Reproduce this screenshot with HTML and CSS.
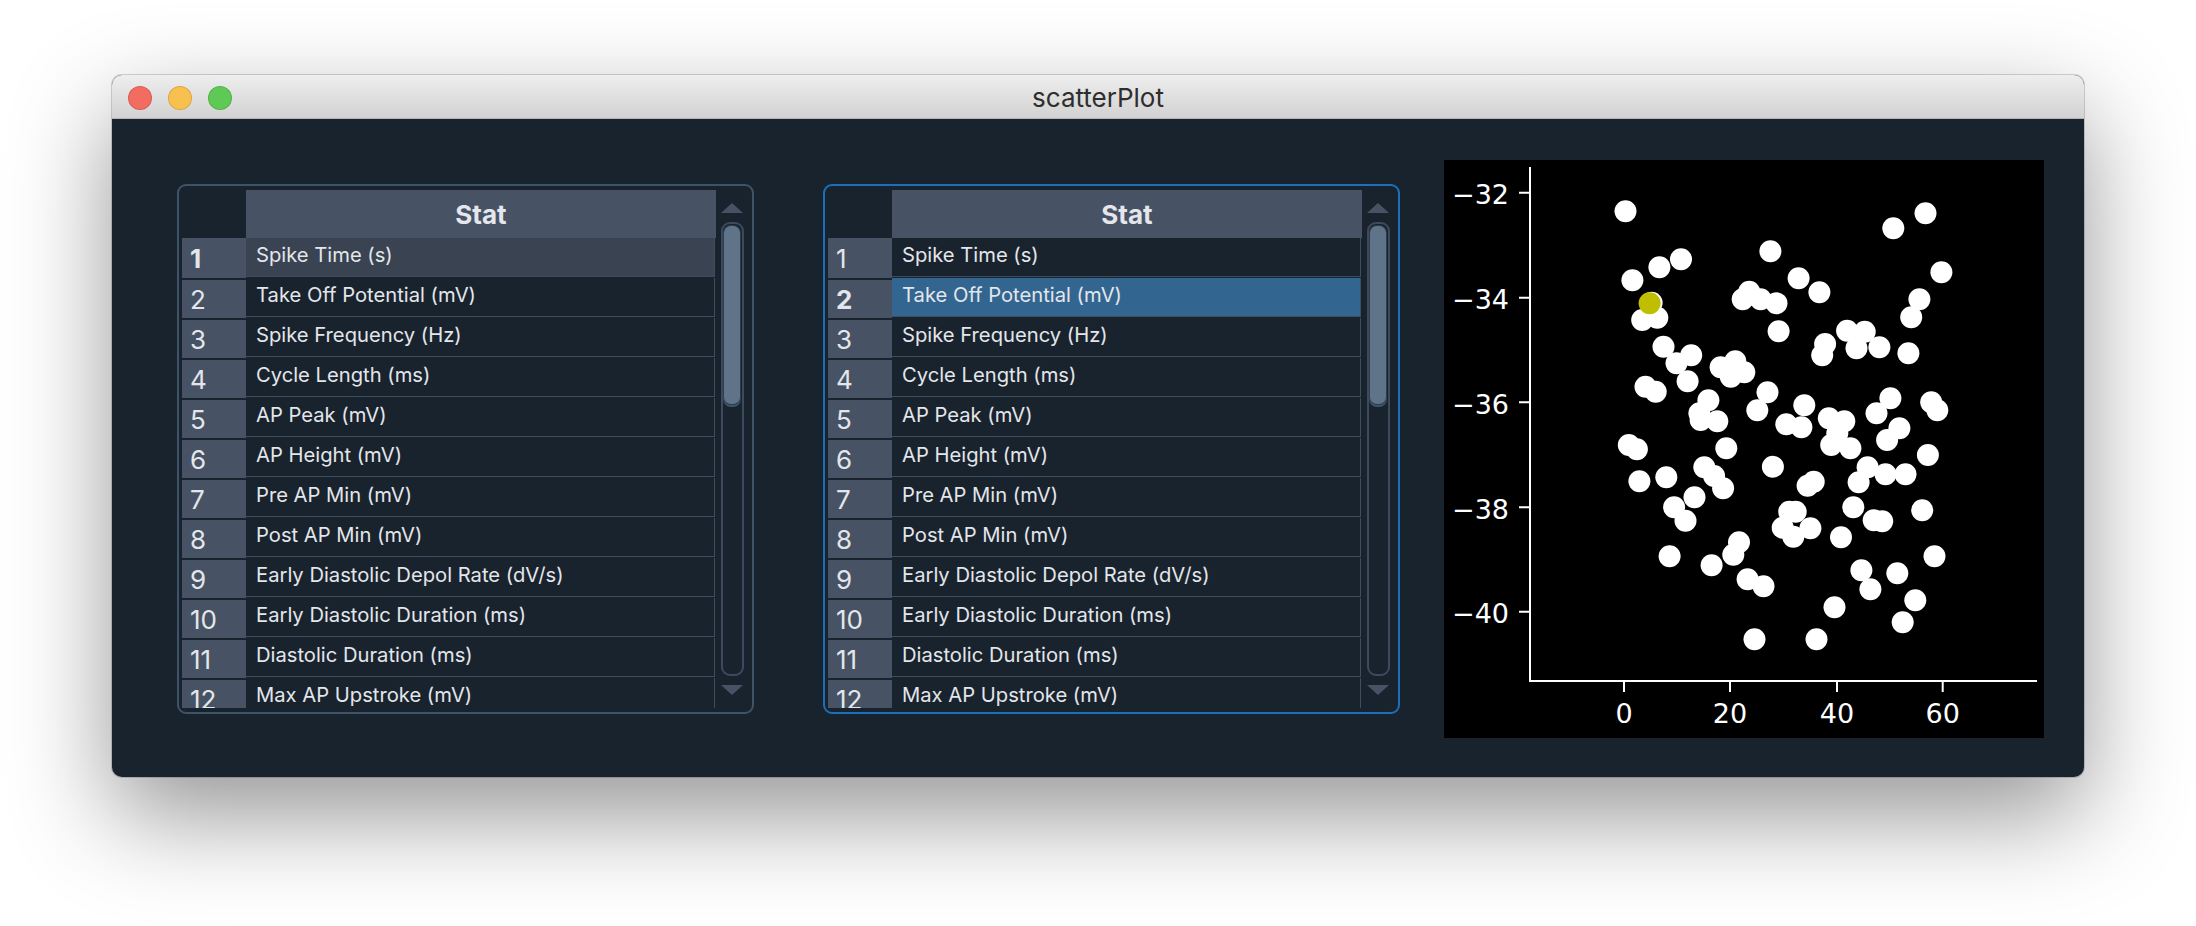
FILE: index.html
```html
<!DOCTYPE html>
<html lang="en">
<head>
<meta charset="UTF-8" />
<title>scatterPlot</title>
<link rel="stylesheet" href="styles.css">
</head>
<body>
  <div class="window">
    <div class="titlebar">
      <div class="lights">
        <span class="light red"></span>
        <span class="light yellow"></span>
        <span class="light green"></span>
      </div>
      <div class="title">scatterPlot</div>
    </div>
    <div class="content">

      <div class="panel">
        <div class="table">
          <div class="head-row"><div class="corner"></div><div class="col-head">Stat</div></div>
          <div class="row current"><div class="row-head">1</div><div class="cell">Spike Time (s)</div></div>
          <div class="row"><div class="row-head">2</div><div class="cell">Take Off Potential (mV)</div></div>
          <div class="row"><div class="row-head">3</div><div class="cell">Spike Frequency (Hz)</div></div>
          <div class="row"><div class="row-head">4</div><div class="cell">Cycle Length (ms)</div></div>
          <div class="row"><div class="row-head">5</div><div class="cell">AP Peak (mV)</div></div>
          <div class="row"><div class="row-head">6</div><div class="cell">AP Height (mV)</div></div>
          <div class="row"><div class="row-head">7</div><div class="cell">Pre AP Min (mV)</div></div>
          <div class="row"><div class="row-head">8</div><div class="cell">Post AP Min (mV)</div></div>
          <div class="row"><div class="row-head">9</div><div class="cell">Early Diastolic Depol Rate (dV/s)</div></div>
          <div class="row"><div class="row-head">10</div><div class="cell">Early Diastolic Duration (ms)</div></div>
          <div class="row"><div class="row-head">11</div><div class="cell">Diastolic Duration (ms)</div></div>
          <div class="row"><div class="row-head">12</div><div class="cell">Max AP Upstroke (mV)</div></div>
        </div>
        <div class="scroll">
          <div class="arrow-up"></div>
          <div class="groove"><div class="handle"></div></div>
          <div class="arrow-down"></div>
        </div>
      </div>

      <div class="panel focused">
        <div class="table">
          <div class="head-row"><div class="corner"></div><div class="col-head">Stat</div></div>
          <div class="row"><div class="row-head">1</div><div class="cell">Spike Time (s)</div></div>
          <div class="row selected"><div class="row-head">2</div><div class="cell">Take Off Potential (mV)</div></div>
          <div class="row"><div class="row-head">3</div><div class="cell">Spike Frequency (Hz)</div></div>
          <div class="row"><div class="row-head">4</div><div class="cell">Cycle Length (ms)</div></div>
          <div class="row"><div class="row-head">5</div><div class="cell">AP Peak (mV)</div></div>
          <div class="row"><div class="row-head">6</div><div class="cell">AP Height (mV)</div></div>
          <div class="row"><div class="row-head">7</div><div class="cell">Pre AP Min (mV)</div></div>
          <div class="row"><div class="row-head">8</div><div class="cell">Post AP Min (mV)</div></div>
          <div class="row"><div class="row-head">9</div><div class="cell">Early Diastolic Depol Rate (dV/s)</div></div>
          <div class="row"><div class="row-head">10</div><div class="cell">Early Diastolic Duration (ms)</div></div>
          <div class="row"><div class="row-head">11</div><div class="cell">Diastolic Duration (ms)</div></div>
          <div class="row"><div class="row-head">12</div><div class="cell">Max AP Upstroke (mV)</div></div>
        </div>
        <div class="scroll">
          <div class="arrow-up"></div>
          <div class="groove"><div class="handle"></div></div>
          <div class="arrow-down"></div>
        </div>
      </div>

      <svg class="plot" width="600" height="578" viewBox="0 0 600 578">
        <path class="axis" d="M86 7V521H593" />
        <path class="axis" d="M75 32.7H86M75 137.7H86M75 242.3H86M75 347.3H86M75 451.7H86" />
        <path class="axis" d="M180 521V532M286 521V532M393 521V532M498.7 521V532" />
        <text class="tick" x="65" y="44" text-anchor="end">−32</text>
        <text class="tick" x="65" y="149" text-anchor="end">−34</text>
        <text class="tick" x="65" y="254" text-anchor="end">−36</text>
        <text class="tick" x="65" y="359" text-anchor="end">−38</text>
        <text class="tick" x="65" y="463" text-anchor="end">−40</text>
        <text class="tick" x="180" y="563" text-anchor="middle">0</text>
        <text class="tick" x="286" y="563" text-anchor="middle">20</text>
        <text class="tick" x="393" y="563" text-anchor="middle">40</text>
        <text class="tick" x="498.7" y="563" text-anchor="middle">60</text>
        <g class="dots">
          <circle cx="181.5" cy="51.3" r="11" /><circle cx="481.5" cy="53.3" r="11" /><circle cx="449.3" cy="68.3" r="11" />
          <circle cx="326.4" cy="91.3" r="11" /><circle cx="237" cy="99.3" r="11" /><circle cx="215.4" cy="107.3" r="11" />
          <circle cx="188.4" cy="120.3" r="11" /><circle cx="497.4" cy="112.3" r="11" /><circle cx="354.6" cy="118.3" r="11" />
          <circle cx="375.4" cy="132.3" r="11" /><circle cx="305.2" cy="131.7" r="11" /><circle cx="298.7" cy="139.3" r="11" />
          <circle cx="316.6" cy="139.3" r="11" /><circle cx="332.5" cy="143.3" r="11" /><circle cx="475.4" cy="139.3" r="11" />
          <circle cx="467.2" cy="157.3" r="11" /><circle cx="207.6" cy="142.7" r="11" /><circle cx="198.2" cy="160" r="11" />
          <circle cx="213.3" cy="157.7" r="11" /><circle cx="334.6" cy="171.3" r="11" /><circle cx="219.5" cy="186.7" r="11" />
          <circle cx="247.2" cy="195.3" r="11" /><circle cx="232.5" cy="203.3" r="11" /><circle cx="243.6" cy="221.3" r="11" />
          <circle cx="403.1" cy="170.7" r="11" /><circle cx="420.7" cy="171.7" r="11" /><circle cx="412.5" cy="188.3" r="11" />
          <circle cx="435.4" cy="187.3" r="11" /><circle cx="464.4" cy="193.3" r="11" /><circle cx="381.1" cy="184" r="11" />
          <circle cx="378.2" cy="195.3" r="11" /><circle cx="291.3" cy="201.3" r="11" /><circle cx="276.6" cy="207.3" r="11" />
          <circle cx="300.3" cy="212.3" r="11" /><circle cx="286.8" cy="216.7" r="11" /><circle cx="201.5" cy="226.7" r="11" />
          <circle cx="211.7" cy="231.7" r="11" /><circle cx="323.5" cy="232.3" r="11" /><circle cx="264.4" cy="240.3" r="11" />
          <circle cx="313.3" cy="250.3" r="11" /><circle cx="255.4" cy="253.3" r="11" /><circle cx="256.6" cy="260" r="11" />
          <circle cx="273.3" cy="261.3" r="11" /><circle cx="360.3" cy="245.3" r="11" /><circle cx="342.3" cy="264.3" r="11" />
          <circle cx="357.4" cy="267.3" r="11" /><circle cx="384.8" cy="258.3" r="11" /><circle cx="400.3" cy="261.3" r="11" />
          <circle cx="393.3" cy="273.3" r="11" /><circle cx="387.2" cy="285" r="11" /><circle cx="406.4" cy="288.3" r="11" />
          <circle cx="432.5" cy="253.3" r="11" /><circle cx="446.4" cy="238.3" r="11" /><circle cx="455.4" cy="268.3" r="11" />
          <circle cx="443.1" cy="280" r="11" /><circle cx="487.2" cy="242.3" r="11" /><circle cx="493.3" cy="250.3" r="11" />
          <circle cx="184.8" cy="285" r="11" /><circle cx="192.9" cy="289.3" r="11" /><circle cx="282.3" cy="288.3" r="11" />
          <circle cx="483.9" cy="295" r="11" /><circle cx="328.9" cy="306.7" r="11" /><circle cx="260.3" cy="307.3" r="11" />
          <circle cx="270.1" cy="316" r="11" /><circle cx="279.1" cy="328.3" r="11" /><circle cx="195.4" cy="321.3" r="11" />
          <circle cx="222.3" cy="317.3" r="11" /><circle cx="423.6" cy="307.3" r="11" /><circle cx="441.5" cy="314.3" r="11" />
          <circle cx="461.5" cy="314.3" r="11" /><circle cx="414.6" cy="322.3" r="11" /><circle cx="369.7" cy="321.7" r="11" />
          <circle cx="363.6" cy="325.7" r="11" /><circle cx="250.5" cy="337.3" r="11" /><circle cx="230.1" cy="347.3" r="11" />
          <circle cx="241.5" cy="360.7" r="11" /><circle cx="409.3" cy="347.3" r="11" /><circle cx="478.2" cy="350.3" r="11" />
          <circle cx="345.2" cy="351.7" r="11" /><circle cx="351.7" cy="351.7" r="11" /><circle cx="429.7" cy="360.3" r="11" />
          <circle cx="438.2" cy="361.3" r="11" /><circle cx="338.7" cy="367.7" r="11" /><circle cx="349.3" cy="376.7" r="11" />
          <circle cx="366.4" cy="368.3" r="11" /><circle cx="397" cy="377.3" r="11" /><circle cx="295" cy="382.3" r="11" />
          <circle cx="289.3" cy="394.7" r="11" /><circle cx="225.6" cy="396.3" r="11" /><circle cx="267.6" cy="405.3" r="11" />
          <circle cx="490.5" cy="396.3" r="11" /><circle cx="417.4" cy="410.3" r="11" /><circle cx="453.3" cy="413.3" r="11" />
          <circle cx="303.6" cy="419.3" r="11" /><circle cx="319.5" cy="426.3" r="11" /><circle cx="426.4" cy="429.3" r="11" />
          <circle cx="390.5" cy="447.3" r="11" /><circle cx="471.3" cy="440.3" r="11" /><circle cx="458.7" cy="462.3" r="11" />
          <circle cx="310.5" cy="479.3" r="11" /><circle cx="372.5" cy="479.3" r="11" />
        </g>
        <circle class="dot-picked" cx="205.6" cy="143.3" r="11" />
      </svg>

    </div>
  </div>
</body>
</html>
```

FILE: styles.css
```css
:root {
  --win-bg: #19232e;
  --line: #3f4d60;
  --head: #475365;
  --text: #e3e6ea;
}

html, body {
  margin: 0;
  height: 100%;
  background: #fff;
  overflow: hidden;
}

body {
  padding: 75px 0 0 112px;
  box-sizing: border-box;
  font-family: Inter, "Liberation Sans", sans-serif;
}

.window {
  width: 1972px;
  height: 702px;
  border-radius: 10px;
  background: var(--win-bg);
  box-shadow: 0 38px 100px rgba(0, 0, 0, 0.42), 0 0 0 1px rgba(0, 0, 0, 0.16);
  overflow: hidden;
}

/* title bar */
.titlebar {
  position: relative;
  height: 44px;
  display: flex;
  align-items: center;
  justify-content: center;
  box-sizing: border-box;
  padding-top: 2px;
  background: linear-gradient(#eeeeee, #d2d2d2);
  border-bottom: 1px solid #b4b4b4;
}

.lights {
  position: absolute;
  left: 16px;
  top: 11px;
  display: flex;
  gap: 16px;
}

.light {
  width: 24px;
  height: 24px;
  border-radius: 50%;
  box-sizing: border-box;
  border: 1px solid rgba(0, 0, 0, 0.12);
}
.light.red { background: #f26d60; }
.light.yellow { background: #f8c04f; }
.light.green { background: #5fc956; }

.title {
  font-size: 26px;
  color: #2e2e2e;
}

/* main area */
.content {
  display: flex;
  align-items: flex-start;
  padding: 41px 0 0 65px;
}

.panel {
  width: 577px;
  height: 530px;
  margin: 24px 69px 0 0;
  box-sizing: border-box;
  display: flex;
  padding: 4px 3px;
  border: 2px solid #3f5368;
  border-radius: 9px;
}
.panel.focused {
  border-color: #1c6fbb;
  margin-right: 44px;
}

.table {
  width: 534px;
  height: 518px;
  overflow: hidden;
}

.head-row {
  display: flex;
  height: 48px;
}
.corner { width: 64px; }
.col-head {
  flex: 1;
  background: var(--head);
  color: var(--text);
  font-size: 26px;
  font-weight: 700;
  line-height: 50px;
  text-align: center;
}

.row {
  display: flex;
  height: 40px;
  color: var(--text);
}

.row-head {
  width: 64px;
  height: 38px;
  margin-top: 2px;
  padding-left: 8px;
  box-sizing: border-box;
  background: var(--head);
  font-size: 26px;
  line-height: 40px;
}
.row:nth-child(2) .row-head {
  height: 40px;
  margin-top: 0;
  line-height: 42px;
}

.cell {
  width: 468px;
  height: 39px;
  padding-left: 10px;
  box-sizing: border-box;
  border-bottom: 1px solid var(--line);
  font-size: 20.2px;
  line-height: 34px;
  box-shadow: 1px 0 0 var(--line);
}

.row.current .row-head, .row.selected .row-head { font-weight: 700; }
.row.current .cell { background: #394352; }
.row.selected .cell { background: #336591; }

/* scroll bar */
.scroll {
  width: 32px;
  display: flex;
  flex-direction: column;
  align-items: center;
  padding-top: 13px;
  box-sizing: border-box;
}

.arrow-up, .arrow-down {
  width: 0;
  height: 0;
  border-left: 11px solid transparent;
  border-right: 11px solid transparent;
}
.arrow-up { border-bottom: 10px solid var(--head); }
.arrow-down { border-top: 10px solid var(--head); }

.groove {
  width: 23px;
  height: 454px;
  margin: 9px 0;
  box-sizing: border-box;
  border: 2px solid #3c4a5b;
  border-radius: 9px;
  padding: 2px 1.5px;
}

.handle {
  height: 178px;
  border-radius: 7px;
  background: #5f7488;
  box-shadow: 0 0 0 1px #2f3c4c, 0 2px 0 1px #3f5468;
}

/* plot */
.plot {
  display: block;
  background: #000;
}
.axis {
  fill: none;
  stroke: #fff;
  stroke-width: 2;
}
.tick {
  fill: #fff;
  font-family: "DejaVu Sans", sans-serif;
  font-size: 27px;
}
.dots circle { fill: #fff; }
.dot-picked { fill: #bfbf00; }
```
